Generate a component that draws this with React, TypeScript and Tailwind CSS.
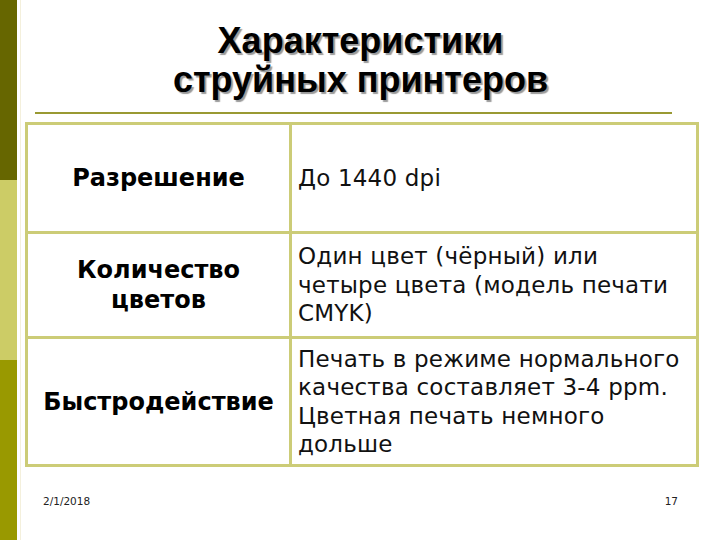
export default function App() {
  const rows = [
    {
      label: ["Разрешение"],
      value: ["До 1440 dpi"],
      h: "h-[106px]",
    },
    {
      label: ["Количество", "цветов"],
      value: ["Один цвет (чёрный) или", "четыре цвета (модель печати", "CMYK)"],
      h: "h-[105px]",
    },
    {
      label: ["Быстродействие"],
      value: [
        "Печать в режиме нормального",
        "качества составляет 3-4 ppm.",
        "Цветная печать немного",
        "дольше",
      ],
      h: "h-[128px]",
    },
  ];

  return (
    <div className="w-[720px] h-[540px] bg-white flex overflow-hidden">
      {/* side stripe */}
      <div className="w-[17px] flex flex-col">
        <div className="flex-1 bg-[#666600]" />
        <div className="flex-1 bg-[#cccc66]" />
        <div className="flex-1 bg-[#999900]" />
      </div>
      <div className="w-[3px]" />
      <div className="w-[1px] bg-[#f4f0dc]" />

      <div className="flex-1 flex flex-col relative">
        <div className="h-[112px] flex flex-col items-center pt-[21px] pr-[20px]">
          <h1
            className="text-[36px] leading-[39px] font-bold text-black text-center [text-shadow:2px_2px_1px_#9a9a9a]"
            style={{ fontFamily: '"Liberation Sans", Arial, sans-serif' }}
          >
            Характеристики
            <br />
            струйных принтеров
          </h1>
        </div>
        <div className="ml-[14px] w-[637px] h-[2px] bg-[#999933]" />

        <div
          className="mt-[8px] ml-[4px] w-[674px] border-[3px] border-[#cccc77] flex flex-col"
          style={{ fontFamily: '"DejaVu Sans", Verdana, sans-serif' }}
        >
          {rows.map((r, i) => (
            <div
              key={i}
              className={`flex ${r.h} ${i > 0 ? "border-t-[3px] border-[#cccc77]" : ""}`}
            >
              <div className="w-[264px] flex items-center justify-center text-center text-[24px] leading-[30px] font-bold text-black border-r-[3px] border-[#cccc77]">
                <div>
                  {r.label.map((l, j) => (
                    <div key={j}>{l}</div>
                  ))}
                </div>
              </div>
              <div className="flex-1 flex items-center pl-[6px] text-[23px] leading-[28.5px] tracking-[0.2px] text-[#111]">
                <div>
                  {r.value.map((v, j) => (
                    <div key={j}>{v}</div>
                  ))}
                </div>
              </div>
            </div>
          ))}
        </div>

        <div
          className="mt-auto mb-[30px] flex justify-between pl-[22px] pr-[42px] text-[10.5px] text-[#222]"
          style={{ fontFamily: '"DejaVu Sans", Verdana, sans-serif' }}
        >
          <span>2/1/2018</span>
          <span>17</span>
        </div>
      </div>
    </div>
  );
}
